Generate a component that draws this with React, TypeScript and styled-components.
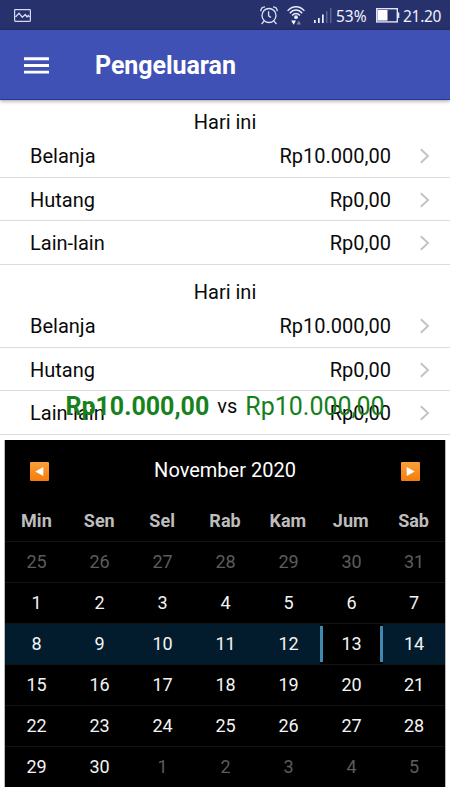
import React from "react";
import styled, { createGlobalStyle } from "styled-components";

const GlobalStyle = createGlobalStyle`
  *, *::before, *::after { box-sizing: border-box; }
  body { margin: 0; background: #fff; font-family: Roboto, sans-serif; }
`;

const Screen = styled.div`
  display: flex;
  flex-direction: column;
  width: 450px;
  height: 800px;
  overflow: hidden;
  background: #fff;
  color: #0a0a0a;
`;

const StatusBar = styled.div`
  display: flex;
  align-items: center;
  flex: none;
  height: 30px;
  padding: 0 9px 0 14px;
  background: #27316b;
  color: #f0f2fd;
  font: 15.5px/30px "Noto Sans", sans-serif;
`;

const StatusIcons = styled.div`
  display: flex;
  align-items: center;
  gap: 9px;
  margin-left: auto;
`;

const Reading = styled.span`
  display: flex;
  align-items: center;
  gap: 4px;
`;

const Percent = styled.span`
  width: 31px;
  padding-top: 1px;
`;

const Clock = styled.span`
  width: 38px;
  margin-left: -1px;
  padding-top: 1px;
  letter-spacing: -0.3px;
`;

const AppBar = styled.header`
  display: flex;
  align-items: center;
  flex: none;
  gap: 46px;
  height: 70px;
  padding: 0 24px;
  background: #3f51b5;
  border-bottom: 1px solid #27398f;
  box-shadow: 0 1px 4px rgba(0, 0, 0, 0.4);
`;

const MenuButton = styled.button`
  display: flex;
  padding: 1px 0 0;
  border: 0;
  background: none;
`;

const Title = styled.h1`
  margin: 3px 0 0;
  color: #fff;
  font-size: 25px;
  font-weight: 700;
  line-height: 30px;
  letter-spacing: -0.05px;
`;

const Section = styled.section`
  height: 170px;
  flex: none;
  padding-top: 9px;
`;

const SectionTitle = styled.h2`
  height: 25px;
  margin: 0;
  font-size: 20px;
  font-weight: 400;
  line-height: 26px;
  text-align: center;
`;

const Row = styled.div`
  display: flex;
  align-items: center;
  height: 43.5px;
  padding: 1.5px 19px 0 30px;
  border-bottom: 1px solid #dcdcdc;
  font-size: 20px;
  line-height: 26px;
`;

const Amount = styled.span`
  margin: 0 28px 0 auto;
`;

const Summary = styled.div`
  display: flex;
  align-items: center;
  justify-content: center;
  flex: none;
  position: relative;
  gap: 8px;
  height: 36px;
  margin-top: -52px;
  font-size: 20px;
`;

const Total = styled.span<{ $strong?: boolean }>`
  color: ${(p) => (p.$strong ? "#17821b" : "#14801a")};
  font-size: 25px;
  font-weight: ${(p) => (p.$strong ? 700 : 400)};
`;

const Calendar = styled.div`
  flex: none;
  width: 442px;
  height: 347px;
  margin: 16px 4px 0;
  border: solid #b9b9b9;
  border-width: 0 1px;
  background: #000;
  color: #fff;
`;

const MonthBar = styled.div`
  display: flex;
  align-items: center;
  justify-content: space-between;
  height: 60px;
  padding: 0 25px;
  font-size: 20px;
`;

const ArrowButton = styled.button`
  display: flex;
  align-items: center;
  justify-content: center;
  width: 19px;
  height: 19px;
  margin-top: 3px;
  padding: 0;
  border: 0;
  border-radius: 1px;
  background: linear-gradient(#f9a03a, #f57c0a);
`;

const Weekdays = styled.div`
  display: grid;
  grid-template-columns: repeat(7, 1fr);
  height: 41px;
  color: #bdbdbd;
  font-size: 18px;
  font-weight: 700;
  line-height: 42px;
  text-align: center;
`;

const Week = styled.div<{ $current: boolean }>`
  display: grid;
  grid-template-columns: repeat(6, 63px) 62px;
  height: 41px;
  border-top: 1px solid #141414;
  background: ${(p) => (p.$current ? "#021c2e" : "#000")};
`;

const Day = styled.div<{ $muted: boolean; $selected: boolean }>`
  display: flex;
  align-items: center;
  justify-content: center;
  padding-bottom: 1px;
  color: ${(p) => (p.$muted ? "#5c5c5c" : "#f4f4f4")};
  background: ${(p) => (p.$selected ? "#000" : "transparent")};
  font-size: 18px;
  letter-spacing: -0.2px;

  &::before,
  &::after {
    content: "";
    display: ${(p) => (p.$selected ? "block" : "none")};
    width: 3px;
    height: 36px;
    background: #3f8aae;
  }
  &::before { margin-right: auto; }
  &::after { margin-left: auto; }
`;

const GalleryIcon = () => (
  <svg width="17" height="13" viewBox="0 0 17 13" fill="none" stroke="#d5dafa">
    <rect x="0.6" y="0.6" width="15.8" height="11.8" rx="0.8" strokeWidth="1.2" />
    <path d="M1.5 8 5 4.2l3.3 4 3-2.7 1.7 2.4 1.3-1.4 1.4 1.7" strokeWidth="1.3" />
  </svg>
);

const AlarmIcon = () => (
  <svg width="18" height="19" viewBox="0 0 18 19" fill="none" stroke="#dfe4fb" strokeWidth="1.3">
    <circle cx="9" cy="9.5" r="7" />
    <path d="M8.6 5.2v4.6l2.4 1.7M.8 5.3C.8 2.6 2.4 1 5 .9M17.2 5.3C17.2 2.6 15.6 1 13 .9M4 15.2 1.6 18M14 15.2l2.4 2.8" />
  </svg>
);

const WifiIcon = () => (
  <svg width="18" height="19" viewBox="0 0 18 19" fill="none" stroke="#e6eafc" strokeWidth="1.4">
    <path d="M.6 4.9C5.4-.7 12.6-.7 17.4 4.9M2.8 7.2c3.6-4.2 8.8-4.2 12.4 0M5.1 9.5c2.3-2.7 5.5-2.7 7.8 0" />
    <circle cx="9" cy="11.2" r="1.9" fill="#e6eafc" stroke="none" />
    <path d="M4.2 14.6h4.8L6.6 18.8z" fill="#fff" stroke="none" />
    <path d="M9.6 18.6H14l-2.2-4z" fill="#7c84b8" stroke="none" />
  </svg>
);

const SignalIcon = () => (
  <svg width="18" height="17" viewBox="0 0 18 17">
    <path d="M0 13h1.7v3H0zM4 11h1.7v5H4zM8 7.4h1.7V16H8z" fill="#eceffc" />
    <path d="M12 4h1.5v12H12zM16 1h1.5v15H16z" fill="#596294" />
  </svg>
);

const BatteryIcon = () => (
  <svg width="24" height="15" viewBox="0 0 24 15" fill="none">
    <rect x="0.7" y="0.7" width="20.6" height="13.2" stroke="#dfe4fb" strokeWidth="1.4" />
    <path d="M1.5 2h10v10.6h-10z" fill="#fff" />
    <path d="M22 4.5h1.3v5.6H22z" fill="#dfe4fb" />
  </svg>
);

const MenuIcon = () => (
  <svg width="25" height="17" viewBox="0 0 25 17" fill="#fff">
    <path d="M0 .3h25v2.9H0zM0 7h25v2.9H0zM0 13.7h25v2.9H0z" />
  </svg>
);

const Chevron = () => (
  <svg width="12" height="16" viewBox="0 0 12 16" fill="none" stroke="#c2c2c2" strokeWidth="1.9">
    <path d="M1.8 1.2 9 8l-7.2 6.8" />
  </svg>
);

const items = [
  ["Belanja", "Rp10.000,00"],
  ["Hutang", "Rp0,00"],
  ["Lain-lain", "Rp0,00"],
];

const Expenses = () => (
  <Section>
    <SectionTitle>Hari ini</SectionTitle>
    {items.map(([name, amount]) => (
      <Row key={name}>
        <span>{name}</span>
        <Amount>{amount}</Amount>
        <Chevron />
      </Row>
    ))}
  </Section>
);

const weekdays = ["Min", "Sen", "Sel", "Rab", "Kam", "Jum", "Sab"];
const weeks = [-6, 1, 8, 15, 22, 29].map((start) =>
  Array.from({ length: 7 }, (_, i) => {
    const n = start + i;
    return { date: n < 1 ? n + 31 : n > 30 ? n - 30 : n, muted: n < 1 || n > 30 };
  })
);

export default function App() {
  return (
    <>
      <GlobalStyle />
      <Screen>
        <StatusBar>
          <GalleryIcon />
          <StatusIcons>
            <AlarmIcon />
            <WifiIcon />
            <Reading>
              <SignalIcon />
              <Percent>53%</Percent>
            </Reading>
            <Reading>
              <BatteryIcon />
              <Clock>21.20</Clock>
            </Reading>
          </StatusIcons>
        </StatusBar>
        <AppBar>
          <MenuButton aria-label="Menu">
            <MenuIcon />
          </MenuButton>
          <Title>Pengeluaran</Title>
        </AppBar>
        <Expenses />
        <Expenses />
        <Summary>
          <Total $strong>Rp10.000,00</Total>
          <span>vs</span>
          <Total>Rp10.000,00</Total>
        </Summary>
        <Calendar>
          <MonthBar>
            <ArrowButton aria-label="Sebelumnya">
              <svg width="9" height="9" viewBox="0 0 9 9" fill="#fff">
                <path d="M8.3 0v9L.3 4.5z" />
              </svg>
            </ArrowButton>
            <span>November 2020</span>
            <ArrowButton aria-label="Berikutnya">
              <svg width="9" height="9" viewBox="0 0 9 9" fill="#fff">
                <path d="M.7 0v9l8-4.5z" />
              </svg>
            </ArrowButton>
          </MonthBar>
          <Weekdays>
            {weekdays.map((d) => (
              <span key={d}>{d}</span>
            ))}
          </Weekdays>
          {weeks.map((week, w) => (
            <Week key={w} $current={w === 2}>
              {week.map(({ date, muted }) => (
                <Day key={date} $muted={muted} $selected={w === 2 && date === 13}>
                  {date}
                </Day>
              ))}
            </Week>
          ))}
        </Calendar>
      </Screen>
    </>
  );
}
